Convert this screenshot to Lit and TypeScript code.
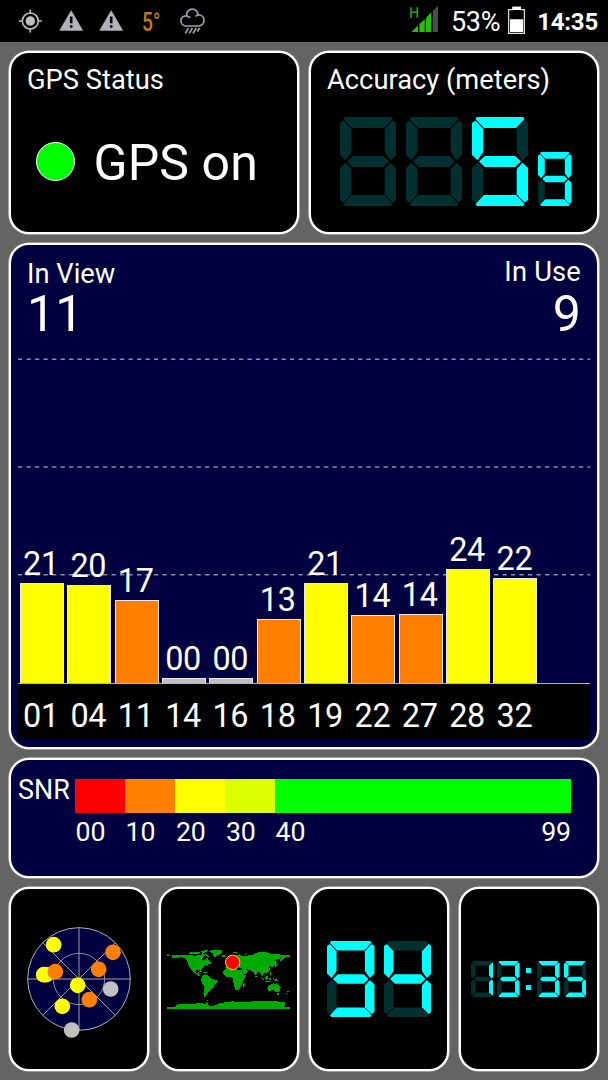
import { LitElement, html, svg, css } from "lit";
import { customElement, property } from "lit/decorators.js";

// Segment order: a b c d e f g
const SEGMENTS = [
  "5,0 51,0 52.6,2 44,11 12,11 3.4,2",
  "56,6 52.6,3.4 44.7,12 44.7,35 50.5,43.2 56,38",
  "56,51 50.5,45.8 44.7,52 44.7,77.5 52.6,85.6 56,83",
  "5,89 51,89 52.6,87 44,78 12,78 3.4,87",
  "0,51 5.5,45.8 11.3,52 11.3,77.5 3.4,85.6 0,83",
  "0,6 3.4,3.4 11.3,12 11.3,35 5.5,43.2 0,38",
  "7,44.5 12.8,39 43.2,39 49,44.5 43.2,50 12.8,50",
];
const DIGITS: Record<string, string> = {
  " ": "0000000",
  "1": "0110000",
  "3": "1111001",
  "4": "0110011",
  "5": "1011011",
  "9": "1111011",
};

@customElement("seg-digit")
class SegDigit extends LitElement {
  @property() char = " ";
  static styles = css`
    :host { display: block; }
    svg { display: block; width: 100%; height: 100%; }
    .on { fill: #00ffff; }
    .off { fill: #003030; }
  `;
  render() {
    const mask = DIGITS[this.char] ?? DIGITS[" "];
    return html`<svg viewBox="0 0 56 89" preserveAspectRatio="none">
      ${SEGMENTS.map((p, i) => svg`<polygon points=${p} class=${mask[i] === "1" ? "on" : "off"}></polygon>`)}
    </svg>`;
  }
}

const SATS = [
  { id: "01", snr: "21", h: 100, c: "yellow" },
  { id: "04", snr: "20", h: 98, c: "yellow" },
  { id: "11", snr: "17", h: 83, c: "orange" },
  { id: "14", snr: "00", h: 5, c: "grey" },
  { id: "16", snr: "00", h: 5, c: "grey" },
  { id: "18", snr: "13", h: 64, c: "orange" },
  { id: "19", snr: "21", h: 100, c: "yellow" },
  { id: "22", snr: "14", h: 68, c: "orange" },
  { id: "27", snr: "14", h: 69, c: "orange" },
  { id: "28", snr: "24", h: 114, c: "yellow" },
  { id: "32", snr: "22", h: 105, c: "yellow" },
];

const SKY = [
  [161, 194, "yellow"], [131, 284, "yellow"], [138, 284, "yellow"], [166, 275, "orange"],
  [339, 217, "orange"], [296, 268, "orange"], [332, 327, "grey"], [268, 359, "orange"],
  [233, 316, "yellow"], [187, 379, "yellow"], [215, 450, "grey"],
] as const;

@customElement("app-root")
class AppRoot extends LitElement {
  static styles = css`
    :host {
      display: block; width: 608px; height: 1080px; overflow: hidden;
      background: #646464; color: #fff; font-family: Roboto, "Noto Sans", sans-serif;
    }
    * { box-sizing: border-box; }
    svg { display: block; }
    .status { height: 42px; background: #000; display: flex; align-items: flex-start; padding-left: 18px; }
    .status svg { flex: none; }
    .warn { margin-left: 15.5px; }
    .temp {
      width: 20px; height: 42px; margin-left: 17.5px; color: #c27c14;
      font: 500 26px/45px Roboto, sans-serif; transform: scaleX(.74); transform-origin: 0 0;
    }
    .rain { margin-left: 17.5px; }
    .right { margin-left: auto; display: flex; padding-right: 10px; }
    .signal { margin-right: 12px; }
    .pct { font-size: 27px; line-height: 44px; width: 57px; white-space: nowrap; letter-spacing: -.3px; }
    .time { font-size: 24px; line-height: 44px; font-weight: 700; width: 72px; text-align: right; white-space: nowrap; letter-spacing: -.2px; }
    .page {
      display: grid; height: 1038px; padding: 9px;
      grid-template-columns: 290px 290px; column-gap: 10px; row-gap: 9px;
      grid-template-rows: 183px 506px 120px 184px;
    }
    .panel { border: 2px solid #fff; border-radius: 20px; background: #000; box-shadow: 0 0 0 .6px #d8d8d8; min-width: 0; }
    .wide { grid-column: 1 / 3; background: #000040; }
    .title { font-size: 27.3px; line-height: 32px; padding: 11px 0 0 16px; white-space: nowrap; }
    .gps { display: flex; align-items: center; padding: 36px 0 0 25px; }
    .lamp { width: 39px; height: 39px; border-radius: 50%; border: 1.6px solid #fff; background: #0f0; margin-top: -2px; }
    .gps-text { font-size: 50px; line-height: 60px; margin-left: 18.5px; padding-top: 1px; white-space: nowrap; letter-spacing: .1px; }
    .acc { display: flex; align-items: flex-end; padding: 21px 0 0 29px; gap: 10px; }
    .d-big { width: 56px; height: 89px; }
    .d-small { width: 33.6px; height: 54px; }
    .view { display: flex; flex-direction: column; padding: 0 7px; }
    .counts { display: flex; justify-content: space-between; padding: 13px 9px 0 9px; height: 113px; }
    .count-label { font-size: 27.3px; line-height: 32px; }
    .count { font-size: 50px; line-height: 48px; letter-spacing: .2px; }
    .in-use { text-align: right; }
    .in-use .count-label { margin-top: -2px; padding-bottom: 2px; letter-spacing: .2px; }
    .chart { height: 326px; display: grid; border-bottom: 1px solid #b4b4c0; }
    .chart > * { grid-area: 1 / 1; }
    .bars { display: flex; align-items: flex-end; padding-left: 2px; gap: 3.35px; }
    .col { width: 44px; flex: none; text-align: center; font-size: 32.4px; line-height: 38px; letter-spacing: -.3px; }
    .col .bar { border: 1px solid #e8e8e8; border-bottom: 0; }
    .col .num { padding-right: 2px; }
    .yellow { background: #ff0; fill: #ff0; }
    .orange { background: #ff8000; fill: #ff8000; }
    .grey { background: #c0c0c0; fill: #c0c0c0; }
    .ids { display: flex; height: 56px; background: #000; padding: 12.5px 0 0 2px; gap: 3.35px; }
    .snr { display: flex; padding: 19px 0 0 7px; }
    .snr-label { width: 57px; font-size: 26.9px; line-height: 22px; }
    .scale { display: grid; grid-template-columns: 50px 50.4px 50px 49.6px 296px; grid-template-rows: 34px 38px; }
    .tick { font-size: 26.7px; line-height: 38px; padding-left: .5px; letter-spacing: -.1px; }
    .red { background: #f00; } .lime { background: #dcff00; } .green { background: #0f0; }
    .last { display: flex; justify-content: space-between; }
    .minis { grid-column: 1 / 3; display: grid; grid-template-columns: 140px 140px 140px 140px; column-gap: 10px; }
    .mini { display: flex; align-items: center; justify-content: center; }
    .speed { gap: 9px; }
    .speed seg-digit { width: 47.5px; height: 76px; }
    .clock { padding-right: 1px; }
    .clock seg-digit { width: 22.6px; height: 36px; }
    .clock .gap { margin-left: 4px; }
    .colon { display: flex; flex-direction: column; gap: 12.6px; margin: 0 6px 0 6px; }
    .colon i { width: 5px; height: 5px; background: #0ff; display: block; }
  `;

  private warning() {
    return html`<svg class="warn" width="25" height="42" viewBox="0 0 25 42">
      <path d="M12.2 10.8 L23.5 30.3 H.9 Z" fill="#b4b4b8" stroke="#b4b4b8" stroke-width=".8" stroke-linejoin="round"/>
      <path d="M10.9 16.5 h2.6 v6.8 h-2.6z M10.9 25.2 h2.6 v2.6 h-2.6z" fill="#000"/>
    </svg>`;
  }

  private statusBar() {
    return html`<div class="status">
      <svg width="25" height="42" viewBox="0 0 25 42" fill="none" stroke="#c0c0c4" stroke-width="1.6">
        <circle cx="12.3" cy="21" r="8"/><circle cx="12.3" cy="21" r="4.7" fill="#c0c0c4" stroke="none"/>
        <path d="M12.3 9.5v4 M12.3 28.5v4 M.8 21h4 M19.8 21h4"/>
      </svg>
      ${this.warning()}${this.warning()}
      <div class="temp">5°</div>
      <svg class="rain" width="28" height="42" viewBox="0 0 28 42" fill="none" stroke="#a0a0a6" stroke-width="1.7">
        <path d="M6.8 26 C-.2 25 .6 15.4 7.6 15.8 C7 7 19.2 7 19 15 C26.4 14.4 27.2 25 20 26 Z"/>
        <path d="M8 16.2 q2 .2 3 1.8 M19 15.2 q-1.6 .2 -2.4 1.2"/>
        <path d="M9.5 28 l-3.2 5.4 M13.4 28 l-3.2 5.4 M17.3 28 l-3.2 5.4 M20.6 28 l-2.2 3.6"/>
      </svg>
      <div class="right">
        <svg class="signal" width="29" height="42" viewBox="0 0 29 42">
          <path d="M1 7.3v10.4 M7.3 7.3v10.4 M1 12.3h6.3" stroke="#1fa81f" stroke-width="1.6" fill="none"/>
          <path d="M1.5 32 L8 25.5 V32z M9.4 24 L14.8 19.2 V32 H9.4z M16 18 L21.2 12.3 V32 H16z" fill="#28c000"/>
          <path d="M22.8 11 L28 5.8 V32 H22.8z" fill="#4c4c4c"/>
        </svg>
        <div class="pct">53%</div>
        <svg width="18" height="42" viewBox="0 0 18 42">
          <path d="M.6 9.6 h4.2 v-2.4 h7.6 v2.4 h4 v23.8 H.6z" stroke="#e0e0e0" stroke-width="1.2" fill="none"/>
          <path d="M4.8 7h7.6v3H4.8z M2 19.3h13.2v12.8H2z" fill="#fff"/>
        </svg>
        <div class="time">14:35</div>
      </div>
    </div>`;
  }

  private sky() {
    return html`<svg width="108" height="118" viewBox="75 120 324 354">
      <circle cx="237" cy="297" r="154" fill="#000040" stroke="#b0b0b0" stroke-width="3"/>
      <circle cx="237" cy="297" r="77" fill="none" stroke="#909098" stroke-width="3"/>
      <path d="M237 143V451 M83 297H391 M128 188L346 406 M346 188L128 406" stroke="#a0a0a8" stroke-width="3"/>
      ${SKY.map(([x, y, c]) => svg`<circle cx=${x} cy=${y} r="23.5" class=${c}></circle>`)}
    </svg>`;
  }

  private world() {
    return html`<svg width="124" height="60" viewBox="35 58 372 180" fill="#00aa00">
      <g shape-rendering="crispEdges">
      <path d="M36 74h6v5h-6z M50 77 L62 75 80 75 95 76 108 75 118 79 128 76 138 78 141 71 148 76 147 82 139 86 142 93 149 92 152 83 158 87 162 94 170 101 160 103 157 108 150 106 146 112 138 118 137 127 132 120 124 119 120 125 123 131 130 128 132 136 138 141 130 138 118 131 110 124 104 114 98 104 96 94 90 87 78 82 66 85 52 86Z"/>
      <path d="M98 70 L110 67 116 72 108 74Z M116 68 L126 66 136 68 128 73 118 73Z M136 65 L150 61 160 62 152 67 148 71 140 68Z M146 73 L156 74 162 81 156 82Z"/>
      <path d="M160 66 L172 61 190 60 201 63 197 72 188 76 181 83 175 79 172 70Z M200 76h9v5h-9z"/>
      <path d="M132 125h9v3h-9z M144 127h10v3h-10z"/>
      <path d="M142 138 L150 134 160 139 167 146 184 152 184 158 178 166 175 174 167 178 162 186 155 190 152 200 146 201 144 192 148 172 140 160 137 150Z"/>
      <path d="M206 121 L214 116 230 116 246 120 258 120 264 133 272 138 264 149 262 160 256 172 250 181 241 182 237 172 234 158 233 145 228 141 212 142 204 134 202 128Z M264 163 L270 157 270 164 266 173 263 171Z"/>
      <path d="M210 114 L212 104 222 102 222 94 236 84 244 76 252 74 262 80 274 78 288 76 300 71 318 66 332 68 346 72 366 74 384 75 404 75 404 81 394 81 386 86 378 96 374 92 376 86 366 88 360 92 364 98 360 106 352 109 350 116 346 108 340 111 344 119 338 128 328 130 322 134 323 142 316 134 311 126 305 128 301 138 296 129 286 122 276 119 270 118 278 124 268 135 262 124 259 115 246 112 236 112 222 114Z"/>
      <path d="M362 102 h4v6l-8 6v-4z M214 92h5v8h-6z M234 67h12v3h-12z M268 73l8-4v3l-6 5z M300 139h4v4h-4z"/>
      <path d="M316 139 L327 149 325 153 317 145Z M328 144 L337 138 339 144 334 150 329 149Z M340 144h6v7h-4z M344 128h4v8h-4z M328 154h20v3h-20z M352 146 L362 147 371 154 364 155 356 151Z"/>
      <path d="M338 170 L348 164 354 160 360 163 365 159 369 167 376 173 374 182 368 188 360 186 354 181 338 185 336 176Z M365 191h5v4h-5z M396 184l6 1-4 5z M390 192l5-2v3l-4 3z"/>
      <path d="M36 233 H60 V230 L64 225 88 222 112 222 134 221 152 222 156 212 161 210 154 218 160 223 156 227 174 229 194 220 204 219 230 215 262 218 274 217 300 214 340 215 352 213 376 217 390 218 390 226 386 231 404 233 V237 H36Z"/>
      </g>
      <circle cx="232" cy="98" r="21.5" fill="#f00" stroke="#ffe040" stroke-width="3"/>
    </svg>`;
  }

  render() {
    return html`${this.statusBar()}
    <div class="page">
      <div class="panel">
        <div class="title">GPS Status</div>
        <div class="gps"><div class="lamp"></div><div class="gps-text">GPS on</div></div>
      </div>
      <div class="panel">
        <div class="title">Accuracy (meters)</div>
        <div class="acc">
          <seg-digit class="d-big" char=" "></seg-digit><seg-digit class="d-big" char=" "></seg-digit>
          <seg-digit class="d-big" char="5"></seg-digit><seg-digit class="d-small" char="9"></seg-digit>
        </div>
      </div>
      <div class="panel wide view">
        <div class="counts">
          <div><div class="count-label">In View</div><div class="count">11</div></div>
          <div class="in-use"><div class="count-label">In Use</div><div class="count">9</div></div>
        </div>
        <div class="chart">
          <svg width="572" height="325" viewBox="0 0 572 325" stroke="#8c8ca4" stroke-width="1.4" stroke-dasharray="4.3 4.2">
            <path d="M0 1.3H572 M0 109H572 M0 216.8H572"/>
          </svg>
          <div class="bars">
            ${SATS.map((s) => html`<div class="col"><div class="num">${s.snr}</div><div class="bar ${s.c}" style="height:${s.h}px"></div></div>`)}
          </div>
        </div>
        <div class="ids">${SATS.map((s) => html`<div class="col"><div class="num">${s.id}</div></div>`)}</div>
      </div>
      <div class="panel wide snr">
        <div class="snr-label">SNR</div>
        <div class="scale">
          <div class="red"></div><div class="orange"></div><div class="yellow"></div><div class="lime"></div><div class="green"></div>
          <div class="tick">00</div><div class="tick">10</div><div class="tick">20</div><div class="tick">30</div>
          <div class="tick last"><span>40</span><span>99</span></div>
        </div>
      </div>
      <div class="minis">
        <div class="panel mini">${this.sky()}</div>
        <div class="panel mini">${this.world()}</div>
        <div class="panel mini speed"><seg-digit char="9"></seg-digit><seg-digit char="4"></seg-digit></div>
        <div class="panel mini clock">
          <seg-digit char="1"></seg-digit><seg-digit class="gap" char="3"></seg-digit>
          <div class="colon"><i></i><i></i></div>
          <seg-digit char="3"></seg-digit><seg-digit class="gap" char="5"></seg-digit>
        </div>
      </div>
    </div>`;
  }
}
